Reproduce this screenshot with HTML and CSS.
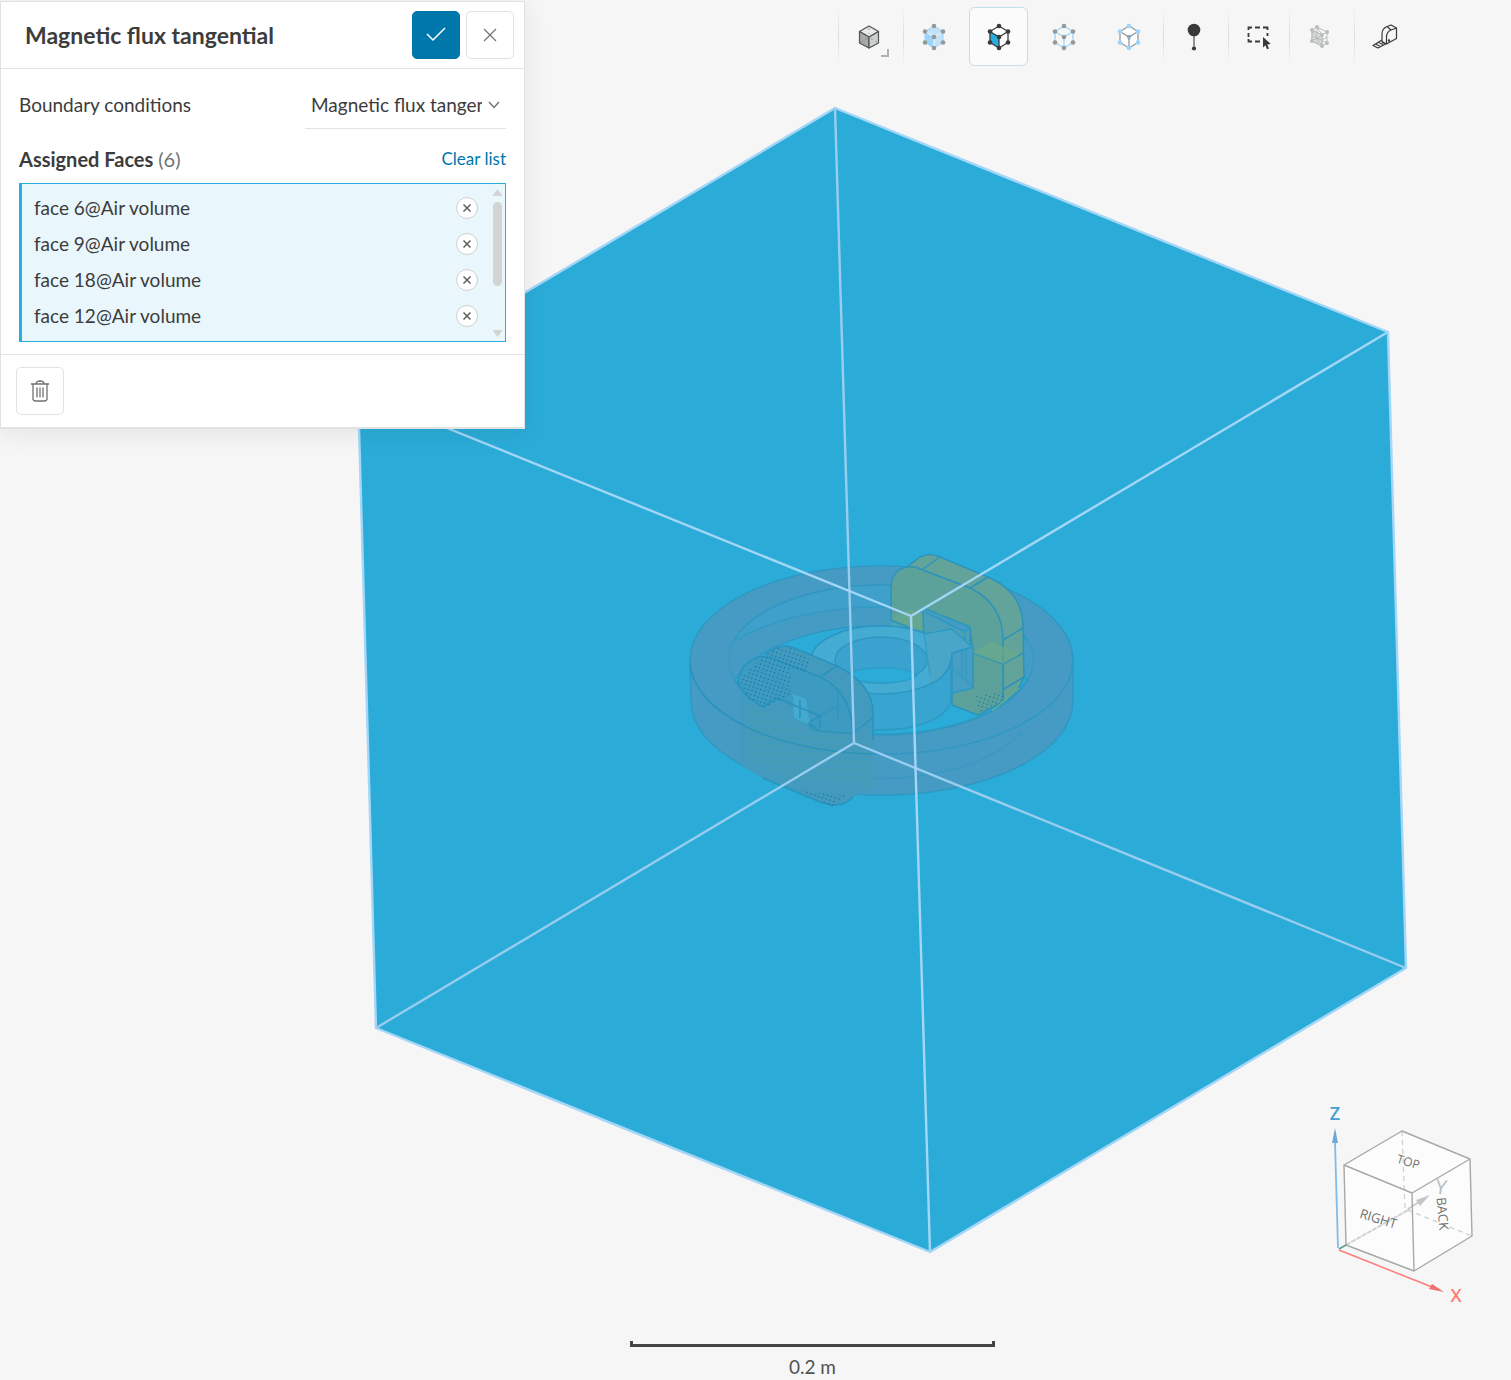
FILE: index.html
```html
<!DOCTYPE html>
<html lang="en">

<head>
    <meta charset="UTF-8">
    <meta name="viewport" content="width=device-width, initial-scale=1">
    <title>Magnetic flux tangential</title>
    <link rel="stylesheet" href="styles.css">
</head>

<body>

    <!-- Shared icon shapes -->
    <svg class="sprite" aria-hidden="true">
        <symbol id="cube-edges" viewBox="0 0 24 28">
            <path d="M12 3 3 8.500v11L12 25l9-5.500v-11zM3 8.500 12 14l9-5.500M12 14v11" fill="none" stroke="currentColor" stroke-width="1.300" />
        </symbol>
        <symbol id="cube-nodes" viewBox="0 0 24 28">
            <g fill="currentColor">
                <circle cx="12" cy="3" r="2.300" />
                <circle cx="3" cy="8.500" r="2.300" />
                <circle cx="21" cy="8.500" r="2.300" />
                <circle cx="12" cy="14" r="2.300" />
                <circle cx="3" cy="19.500" r="2.300" />
                <circle cx="21" cy="19.500" r="2.300" />
                <circle cx="12" cy="25" r="2.300" />
            </g>
        </symbol>
        <symbol id="small-x" viewBox="0 0 10 10">
            <path d="M1.500 1.500l7 7M8.500 1.500l-7 7" fill="none" stroke="currentColor" stroke-width="1.500" />
        </symbol>
    </svg>

    <main class="viewer">

        <!-- 3D scene -->
        <svg class="scene" viewBox="0 0 1511 1380" role="img" aria-label="Air volume with six selected faces">
            <defs>
                <pattern id="dots" width="4" height="4" patternUnits="userSpaceOnUse" patternTransform="rotate(18)">
                    <rect width="1.200" height="1.200" fill="#0d6c9c" />
                </pattern>
                <pattern id="haze" width="4" height="4" patternUnits="userSpaceOnUse">
                    <rect width="1" height="1" fill="#69a874" />
                    <rect x="2" y="2" width="1" height="1" fill="#56a5b0" />
                </pattern>
            </defs>

            <path d="M835 108 1388 332 1406 968 930 1252 376 1028 358 392z" fill="#2bacd8" />

            <!-- outer ring -->
            <g stroke="#2f98c2" stroke-width="1.500">
                <path d="M690 660A191 94 0 0 1 1073 660V701A191 94 0 0 1 691 701z" fill="#459bc3" />
                <ellipse cx="881" cy="660" rx="152" ry="75" fill="#3ea0cb" />
                <path d="M734 641A191 94 0 0 1 1028 641A152 75 0 0 1 1027 680A152 75 0 0 0 735 680A152 75 0 0 1 734 641z" fill="#449cc5" stroke="none" />
                <path d="M734 641A191 94 0 0 1 1028 641" fill="none" stroke-opacity=".7" />
                <path d="M735 680A152 75 0 0 1 1027 680A152 75 0 0 1 735 680z" fill="#2bacd8" />
                <path d="M690 660A191 94 0 0 0 1073 660" fill="none" />
                <path d="M741 732A152 76 0 0 0 1021 732" fill="none" stroke-opacity=".5" />
            </g>

            <!-- coil, far side -->
            <g stroke="#2c93bd" stroke-width="1.500" stroke-linejoin="round">
                <path d="M908 566 920 557Q930 552 940 557L988 577Q1023 592 1023 627L1024 677Q1018 694 1003 702V640L970 588z" fill="#62a39a" />
                <path d="M891 620 924 634 926 684H916Q894 666 891 620z" fill="#4ca4b4" stroke="none" />
                <path d="M891 620V586Q893 565 915 567L970 588Q1003 604 1003 640V702L978 715 952 705V693L973 688V653L970 627 923 608V634z" fill="#5da19b" />
                <path d="M923 569 940 557M970 588 988 577M1003 640 1023 628M1003 664 1023 653M1004 689 1024 677M973 653 1003 664" fill="none" />
                <path d="M892 619 909 609 923 614V631zM973 653 991 641 1020 654 1003 664z" fill="#6dac88" stroke="none" opacity=".6" />
                <path d="M992 711 1003 702 1019 688" fill="none" stroke="#6dac88" />
            </g>
            <path d="M974 696 1003 692V702L980 713z" fill="url(#dots)" />

            <!-- core -->
            <g stroke="#2e98c3" stroke-width="1.500" stroke-linejoin="round">
                <path d="M811 660A70 34 0 0 1 951 660V697C951 740 811 742 811 697z" fill="#38a5d0" />
                <path d="M923 608 970 627V653L952 665 924 634zM925 612 965 632 970 627M965 632V648" fill="#4ba0b9" />
                <ellipse cx="881" cy="660" rx="70" ry="34" fill="#44abd3" />
                <ellipse cx="881" cy="660" rx="46" ry="23" fill="#3aa2ce" />
                <path d="M843 676C860 665 906 665 917 676 903 685 861 685 843 676z" fill="#2bacd8" stroke-opacity=".6" />
                <path d="M924 634 930 632 952 629 972 647 952 653Q950 676 930 684L927 660z" fill="#4aa6c8" stroke="none" />
                <path d="M924 634 952 629 972 647 952 653Q950 676 930 684" fill="none" />
                <path d="M952 653 973 647V688L952 693z" fill="#469fc2" />
                <path d="M924 634 930 674M952 653 966 650V680L973 688M953 670 966 680M962 651V678" fill="none" stroke-opacity=".7" />
            </g>

            <!-- coil, near side -->
            <g stroke="#2993be" stroke-width="1.500" stroke-linejoin="round">
                <path d="M765 655Q779 643 792 647L837 666Q873 684 873 713V787L853 797Q842 806 830 806L763 778 741 765 740 692z" fill="#429abf" stroke="none" />
                <path d="M765 655Q779 643 792 647L837 666Q873 684 873 713V740M820 677 837 666M853 733 873 718M763 778 820 802Q842 810 853 797" fill="none" />
                <path d="M738 683C740 661 760 651 777 660L820 677Q851 691 853 733Q832 733 813 730L808 723 820 716 777 698 763 707Q744 697 738 683z" fill="#3d9ac0" />
                <path d="M793 694 806 699 810 725 794 718z" fill="#44aacf" stroke="none" />
                <path d="M777 698 820 716V728M800 700V718M808 723 822 732" fill="none" />
                <path d="M820 716 838 705M838 690V720" fill="none" stroke-opacity=".5" />
                <path d="M690 663A191 94 0 0 0 873 754" fill="none" />
            </g>
            <path d="M745 705 820 728 873 735V785L790 780 745 755z" fill="url(#haze)" opacity=".3" />
            <path d="M765 655 780 647 792 648 811 660 806 672 791 669 790 696 763 707Q740 698 741 678zM797 791 847 795 832 806z" fill="url(#dots)" />

            <!-- volume edges -->
            <g fill="none" stroke="#a3d6f7" stroke-width="2.400" stroke-linejoin="round">
                <path d="M835 108 1388 332 1406 968 930 1252 376 1028 358 392z" />
                <path d="M854 743 835 108M854 743 376 1028M854 743 1406 968" stroke="#98cdef" />
                <path d="M911 616 358 392M911 616 1388 332M911 616 930 1252" />
            </g>
        </svg>

        <div class="top-row">
            <!-- Settings panel -->
            <section class="panel" aria-labelledby="panelTitle">
                <header class="panel-header">
                    <h1 id="panelTitle">Magnetic flux tangential</h1>
                    <button class="btn btn-primary" type="button" aria-label="Apply">
                        <svg width="20" height="16" viewBox="0 0 20 16"><path d="M1 7l6 6L19 1" fill="none" stroke="currentColor" stroke-width="1.500" /></svg>
                    </button>
                    <button class="btn" type="button" aria-label="Close">
                        <svg width="14" height="14" viewBox="0 0 14 14"><path d="M1 1l12 12M13 1L1 13" fill="none" stroke="currentColor" stroke-width="1.200" /></svg>
                    </button>
                </header>

                <div class="panel-body">
                    <div class="field">
                        <label for="condition">Boundary conditions</label>
                        <div class="select-wrap">
                            <select id="condition">
                                <option>Magnetic flux tangential</option>
                            </select>
                            <svg class="chevron" width="12" height="8" viewBox="0 0 12 8" aria-hidden="true"><path d="M1 1l5 5.500L11 1" fill="none" stroke="currentColor" stroke-width="1.400" /></svg>
                        </div>
                    </div>

                    <div class="faces-head">
                        <h2>Assigned Faces <span class="count">(6)</span></h2>
                        <button class="link-btn" type="button">Clear list</button>
                    </div>

                    <div class="faces">
                        <ul class="face-list">
                            <li>face 6@Air volume <button class="remove" type="button" aria-label="Remove face 6"><svg width="10" height="10"><use href="#small-x" /></svg></button></li>
                            <li>face 9@Air volume <button class="remove" type="button" aria-label="Remove face 9"><svg width="10" height="10"><use href="#small-x" /></svg></button></li>
                            <li>face 18@Air volume <button class="remove" type="button" aria-label="Remove face 18"><svg width="10" height="10"><use href="#small-x" /></svg></button></li>
                            <li>face 12@Air volume <button class="remove" type="button" aria-label="Remove face 12"><svg width="10" height="10"><use href="#small-x" /></svg></button></li>
                        </ul>
                        <div class="scrollbar" aria-hidden="true">
                            <svg width="9" height="7" viewBox="0 0 9 7"><path d="M4.500 0 9 6v1H0V6z" fill="currentColor" /></svg>
                            <span class="thumb"></span>
                            <svg class="arrow-down" width="9" height="7" viewBox="0 0 9 7"><path d="M4.500 7 9 1V0H0v1z" fill="currentColor" /></svg>
                        </div>
                    </div>
                </div>

                <footer class="panel-footer">
                    <button class="btn" type="button" aria-label="Delete">
                        <svg width="18" height="22" viewBox="0 0 18 22" fill="none" stroke="currentColor" stroke-width="1.300"><path d="M0 4h18M2 4v14.500Q2 21 4.500 21h9q2.500 0 2.500-2.500V4M5 4q0-3 4-3t4 3M6 7.500v10M9 7.500v10M12 7.500v10" /></svg>
                    </button>
                </footer>
            </section>

            <!-- View and selection tools -->
            <nav class="toolbar" aria-label="View tools">
                <div class="tool-group">
                    <button class="tool has-menu" type="button" aria-label="Render mode">
                        <svg width="24" height="28" viewBox="0 0 24 28" stroke="#505352" stroke-width="1.200" stroke-linejoin="round">
                            <path d="M12 3 2.500 8.500 12 14l9.500-5.500z" fill="#e9ebea" />
                            <path d="M2.500 8.500V20l9.500 5V14z" fill="#a7acaa" />
                            <path d="M21.500 8.500V20L12 25V14z" fill="#cdd1cf" />
                            <path d="M12 5v6M4 19l16-9M20 19 4 10" stroke="#7e8381" stroke-width=".8" stroke-dasharray="2 3" />
                        </svg>
                    </button>
                </div>
                <div class="tool-group">
                    <button class="tool muted" type="button" aria-label="Select volumes">
                        <svg width="24" height="28" viewBox="0 0 24 28">
                            <path d="M12 3 3 8.500v11L12 25l9-5.500v-11z" fill="#c4e2f6" />
                            <path d="M3 8.500 12 14v11l-9-5.500z" fill="#9cd4fa" />
                            <path d="M12 3 3 8.500v11L12 25l9-5.500v-11z" fill="none" stroke="#9cd4fa" />
                            <path d="M3 8.500 12 14l9-5.500M12 14v11" fill="none" stroke="#f0f6fa" />
                            <use href="#cube-nodes" />
                        </svg>
                    </button>
                    <button class="tool active" type="button" aria-label="Select faces" aria-pressed="true">
                        <svg width="24" height="28" viewBox="0 0 24 28">
                            <path d="M12 3 3 8.500v11L12 25l9-5.500v-11z" fill="#fff" />
                            <path d="M3 8.500 12 14v11l-9-5.500z" fill="#2aacde" />
                            <use href="#cube-edges" />
                            <use href="#cube-nodes" />
                        </svg>
                    </button>
                    <button class="tool muted" type="button" aria-label="Select edges">
                        <svg width="24" height="28" viewBox="0 0 24 28">
                            <use href="#cube-edges" class="light-blue" />
                            <use href="#cube-nodes" />
                        </svg>
                    </button>
                    <button class="tool muted" type="button" aria-label="Select vertices">
                        <svg width="24" height="28" viewBox="0 0 24 28">
                            <path d="M12 3 3 8.500v11L12 25l9-5.500v-11z" fill="#fff" />
                            <use href="#cube-edges" />
                            <use href="#cube-nodes" class="light-blue" />
                            <path d="M12 12v5M9.500 12.500 12 14l2.500-1.500" fill="none" stroke="#949997" stroke-width="1.300" />
                        </svg>
                    </button>
                </div>
                <div class="tool-group">
                    <button class="tool" type="button" aria-label="Pin">
                        <svg width="14" height="28" viewBox="0 0 14 28" fill="currentColor">
                            <path d="M7 7v18" stroke="#6d706f" stroke-width="1.500" />
                            <circle cx="7" cy="7" r="6.300" />
                            <circle cx="7" cy="25.500" r="2.100" />
                        </svg>
                    </button>
                </div>
                <div class="tool-group tight">
                    <button class="tool" type="button" aria-label="Box selection">
                        <svg width="24" height="26" viewBox="0 0 24 26">
                            <path d="M1.500 6V3.500H5M8 3.500h5M16 3.500h4.500V6M20.500 9v3M1.500 9v4M1.500 15v2.500H5M8 17.500h5" fill="none" stroke="currentColor" stroke-width="1.800" />
                            <path d="M16 13v10.500l2.400-2.200 1.600 4 2-.9-1.700-3.900 3.500-.5z" fill="currentColor" />
                        </svg>
                    </button>
                </div>
                <div class="tool-group">
                    <button class="tool faded" type="button" aria-label="Mesh clip">
                        <svg width="22" height="26" viewBox="0 0 22 26" fill="none" stroke="currentColor">
                            <path d="M3 6 13 11v11L3 17z" fill="#dfe2e1" />
                            <path d="M3 6 8 3l10 5v11l-5 3V11l5-3M3 6l10 5M3 6v11l10 5M3 12l10 4M8 3v16M3 17 13 11M3 6l10 16M13 11 8 3M13 16l5-3M3 17l5-3 10 5" />
                            <g fill="currentColor" stroke="none">
                                <circle cx="8" cy="3" r="2" /><circle cx="3" cy="6" r="2" /><circle cx="18" cy="8" r="2" /><circle cx="13" cy="11" r="2" /><circle cx="3" cy="17" r="2" /><circle cx="18" cy="19" r="2" /><circle cx="13" cy="22" r="2" />
                            </g>
                        </svg>
                    </button>
                </div>
                <div class="tool-group">
                    <button class="tool" type="button" aria-label="Measure">
                        <svg width="26" height="26" viewBox="0 0 26 26" fill="none" stroke="currentColor" stroke-width="1.200" stroke-linejoin="round">
                            <path d="M10 17.500V10Q10 4.500 15 2.500L19 1 24.500 4v10.500L14.500 20zM14.500 20v-7Q14.500 8 19 6l5.500-2M15 2.500l4 3.500M10 16 1 21.500l5 2.500 8.500-4.500M10 18.500l4.500 1.500M3.500 20 8.500 22.500M6.500 18.500l4.500 2" />
                            <circle cx="17" cy="16.500" r=".6" fill="currentColor" />
                        </svg>
                    </button>
                </div>
            </nav>
        </div>

        <!-- Orientation cube -->
        <svg class="gizmo" width="190" height="230" viewBox="0 0 190 230" role="img" aria-label="View orientation">
            <path d="M92 41 160 69 162 146 104 181 36 155 34 75z" fill="#fcfcfc" />
            <g fill="none" stroke="#cfd1d0" stroke-width="1.300" stroke-dasharray="5 4">
                <path d="M92 41 95 119 162 146" />
            </g>
            <path d="M36 155 100 119" stroke="#cfd3d2" stroke-width="2" stroke-dasharray="5 1" />
            <path d="M98 119 109 112" stroke="#c5c8c7" stroke-width="1.500" />
            <path d="M106 110 120 105 110 116z" fill="#c5c8c7" />
            <g fill="none" stroke="#a5a9a7" stroke-width="1.400" stroke-linejoin="round">
                <path d="M92 41 160 69 162 146 104 181 36 155 34 75zM34 75 102 103 160 69M102 103 104 181" />
            </g>
            <path d="M29 159 36 155" stroke="#599b8f" stroke-width="1.500" />
            <path d="M28 158 25 52" stroke="#83bbe8" stroke-width="1.800" />
            <path d="M25 38 28 53H22z" fill="#6aa9da" />
            <path d="M29 160 122 197" stroke="#ff7b79" stroke-width="1.500" />
            <path d="M134 202 119 199 122 194z" fill="#f36e6c" />
            <text class="axis axis-z" x="25" y="30">Z</text>
            <text class="axis axis-x" x="146" y="212">X</text>
            <text class="axis axis-y" transform="translate(130 104) rotate(8)">Y</text>
            <text class="face face-small" transform="translate(97 76) rotate(17)">TOP</text>
            <text class="face" transform="translate(67 133) rotate(17)">RIGHT</text>
            <text class="face" transform="translate(128 124) rotate(85)">BACK</text>
        </svg>

        <div class="scale">
            <div class="scale-bar"></div>
            <span>0.2 m</span>
        </div>
    </main>

</body>

</html>
```
FILE: styles.css
```css
* {
    box-sizing: border-box;
}

body {
    margin: 0;
    background-color: #f6f6f6;
    color: #3c3c3c;
    font-family: Lato, sans-serif;
    font-size: 19px;
    line-height: 24px;
}

button,
select {
    font: inherit;
    color: inherit;
}

button {
    cursor: pointer;
    padding: 0;
}

.sprite {
    position: absolute;
    width: 0;
    height: 0;
}

.viewer {
    position: relative;
    min-height: 100vh;
    display: flex;
    flex-direction: column;
}

/* The scene lies behind everything else */
.scene {
    position: absolute;
    inset: 0;
    width: 100%;
    height: 100%;
}

.top-row {
    position: relative;
    display: flex;
    justify-content: space-between;
    align-items: flex-start;
    padding: 1px 97px 0 0;
}

/* Panel */
.panel {
    width: 525px;
    background-color: #fff;
    border: 1px solid #e2e2e2;
    border-bottom-width: 2px;
    box-shadow: 0 4px 24px rgba(0, 0, 0, 0.08);
}

.panel-header {
    display: flex;
    align-items: center;
    gap: 6px;
    padding: 9px 10px 9px 24px;
    border-bottom: 1px solid #e4e4e4;
}

.panel-header h1 {
    flex: 1;
    margin: 0;
    font-size: 23px;
    font-weight: bold;
}

.btn {
    display: flex;
    align-items: center;
    justify-content: center;
    width: 48px;
    height: 48px;
    background-color: #fff;
    border: 1px solid #e2e2e2;
    border-radius: 5px;
    color: #6f7372;
}

.btn-primary {
    background-color: #0077ab;
    border-color: #0077ab;
    color: #fff;
}

.panel-body {
    padding: 12px 18px;
}

.field {
    display: flex;
    justify-content: space-between;
    align-items: center;
}

.select-wrap {
    position: relative;
    width: 201px;
}

.select-wrap select {
    display: block;
    width: 100%;
    height: 48px;
    padding: 0 24px 0 6px;
    border: 0;
    border-bottom: 1px solid #e2e2e2;
    background: none;
    appearance: none;
    text-overflow: clip;
}

.chevron {
    position: absolute;
    right: 6px;
    top: 20px;
    color: #6f7372;
    pointer-events: none;
}

.faces-head {
    display: flex;
    justify-content: space-between;
    align-items: center;
    padding: 18px 0 12px;
}

.faces-head h2 {
    margin: 0;
    font-size: 20px;
    font-weight: bold;
}

.count {
    font-weight: normal;
    color: #6f7372;
}

.link-btn {
    border: 0;
    background: none;
    color: #0077ab;
    font-size: 17px;
}

.faces {
    display: flex;
    border: 1px solid #2aacdd;
    border-left-width: 3px;
    background-color: #e9f6fc;
}

.face-list {
    flex: 1;
    list-style: none;
    margin: 0;
    padding: 6px 15px 7px 12px;
}

.face-list li {
    display: flex;
    align-items: center;
    justify-content: space-between;
    height: 36px;
}

.remove {
    display: flex;
    align-items: center;
    justify-content: center;
    width: 22px;
    height: 22px;
    background-color: #fff;
    border: 1px solid #cfd1d0;
    border-radius: 50%;
    color: #5c605f;
}

.scrollbar {
    display: flex;
    flex-direction: column;
    gap: 6px;
    padding: 5px 3px 4px 0;
    color: #d3d5d4;
}

.thumb {
    width: 9px;
    height: 84px;
    border-radius: 5px;
    background-color: #d3d5d4;
}

.arrow-down {
    margin-top: auto;
}

.panel-footer {
    padding: 12px 15px;
    border-top: 1px solid #e4e4e4;
}

/* Toolbar */
.toolbar {
    display: flex;
    padding-top: 6px;
}

.tool-group {
    display: flex;
    gap: 6px;
    padding-right: 5px;
    border-left: 1px solid;
    border-image: linear-gradient(transparent, #dcdcdc, transparent) 1;
}

.tool-group.tight {
    padding-right: 1px;
}

.tool-group:last-child {
    padding-right: 0;
}

.tool {
    position: relative;
    display: flex;
    align-items: center;
    justify-content: center;
    width: 59px;
    height: 59px;
    background: none;
    border: 1px solid transparent;
    border-radius: 6px;
    color: #383a39;
}

.tool.active {
    background-color: #fbfbfb;
    border-color: #c3deec;
}

.tool.muted {
    color: #949997;
}

.tool.faded {
    color: #b9bdbb;
}

.light-blue {
    color: #9cd4fa;
}

.has-menu::after {
    content: "";
    position: absolute;
    right: 8px;
    bottom: 8px;
    width: 6px;
    height: 6px;
    border: solid #aeb2b0;
    border-width: 0 2px 2px 0;
}

/* Orientation cube */
.gizmo {
    position: relative;
    align-self: flex-end;
    margin: auto 11px 21px 0;
}

.gizmo text {
    text-anchor: middle;
}

.axis {
    font-family: "Open Sans", sans-serif;
    font-size: 18px;
    font-weight: 600;
}

.axis-x {
    fill: #ff7b79;
}

.axis-y {
    fill: #b9bdbb;
    font-size: 20px;
    font-weight: normal;
}

.axis-z {
    fill: #459fd4;
}

.face {
    font-family: "Open Sans", sans-serif;
    font-size: 13px;
    fill: #6f7372;
}

.face-small {
    font-size: 12px;
}

/* Scale */
.scale {
    position: relative;
    display: flex;
    flex-direction: column;
    align-items: center;
    gap: 8px;
    padding: 0 0 1px 114px;
    color: #505352;
}

.scale-bar {
    width: 365px;
    height: 6px;
    border: solid #434544;
    border-width: 0 3px 3px;
}
```
